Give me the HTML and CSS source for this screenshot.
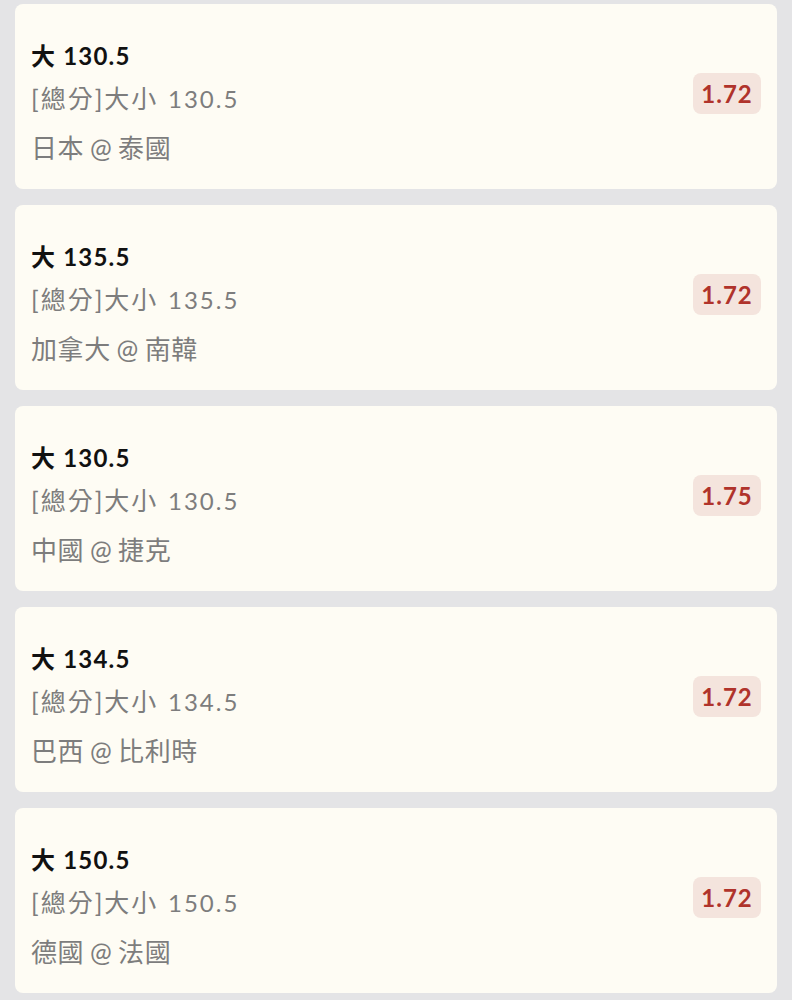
FILE: index.html
```html
<!DOCTYPE html>
<html lang="zh-Hant">
<head>
<meta charset="utf-8">
<link rel="stylesheet" href="styles.css">
</head>
<body>
<div class="list">
  <div class="card">
    <div class="info">
      <div class="title">大 130.5</div>
      <div class="market"><span class="tag">[總分]大小</span> 130.5</div>
      <div class="teams">日本 @ 泰國</div>
    </div>
    <div class="odds">1.72</div>
  </div>
  <div class="card">
    <div class="info">
      <div class="title">大 135.5</div>
      <div class="market"><span class="tag">[總分]大小</span> 135.5</div>
      <div class="teams">加拿大 @ 南韓</div>
    </div>
    <div class="odds">1.72</div>
  </div>
  <div class="card">
    <div class="info">
      <div class="title">大 130.5</div>
      <div class="market"><span class="tag">[總分]大小</span> 130.5</div>
      <div class="teams">中國 @ 捷克</div>
    </div>
    <div class="odds">1.75</div>
  </div>
  <div class="card">
    <div class="info">
      <div class="title">大 134.5</div>
      <div class="market"><span class="tag">[總分]大小</span> 134.5</div>
      <div class="teams">巴西 @ 比利時</div>
    </div>
    <div class="odds">1.72</div>
  </div>
  <div class="card">
    <div class="info">
      <div class="title">大 150.5</div>
      <div class="market"><span class="tag">[總分]大小</span> 150.5</div>
      <div class="teams">德國 @ 法國</div>
    </div>
    <div class="odds">1.72</div>
  </div>
</div>
</body>
</html>
```
FILE: styles.css
```css
html, body {
  margin: 0;
  padding: 0;
  background: #e4e4e6;
}
body {
  font-family: Lato, "Noto Sans CJK TC", sans-serif;
}
.list {
  display: flex;
  flex-direction: column;
  gap: 16px;
  padding: 4px 15px 10px;
}
.card {
  background: #fefcf4;
  border-radius: 8px;
  height: 185px;
  box-sizing: border-box;
  padding: 31px 16px 0;
  display: flex;
  align-items: flex-start;
  justify-content: space-between;
}
.info {
  display: flex;
  flex-direction: column;
}
.title {
  font-size: 24px;
  font-weight: 700;
  color: #111;
  line-height: 41px;
  letter-spacing: 1.2px;
}
.market {
  font-size: 24px;
  color: #7d7d7d;
  line-height: 44px;
  letter-spacing: 2px;
  word-spacing: 1.5px;
}
.tag {
  font-size: 25px;
}
.teams {
  font-size: 26px;
  color: #7d7d7d;
  line-height: 54px;
  letter-spacing: 0.6px;
  word-spacing: -1.5px;
}
.odds {
  background: #f4e4dd;
  color: #b0332b;
  font-size: 24px;
  font-weight: 700;
  letter-spacing: 1px;
  border-radius: 8px;
  width: 68px;
  height: 41px;
  display: flex;
  align-items: center;
  justify-content: center;
  margin-top: 38px;
}
```
